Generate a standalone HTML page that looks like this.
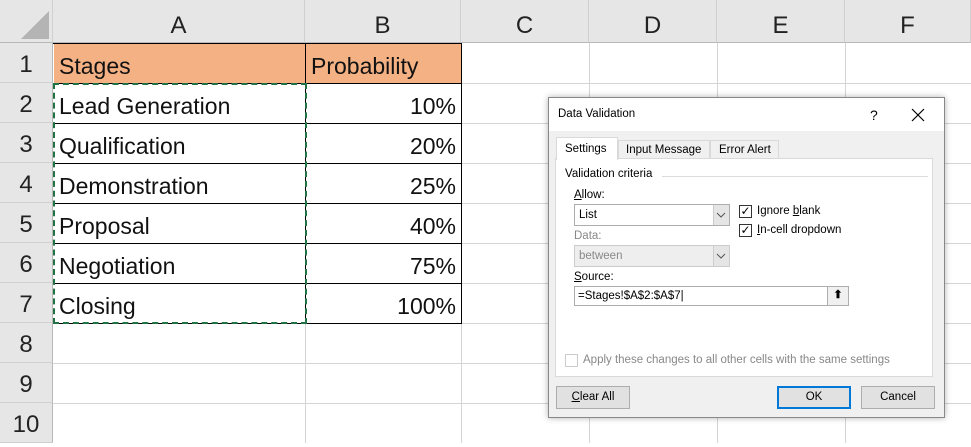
<!DOCTYPE html>
<html><head><meta charset="utf-8"><style>
*{margin:0;padding:0;box-sizing:border-box}
body{width:971px;height:443px;overflow:hidden;background:#fff;position:relative;font-family:"Liberation Sans",sans-serif}
.a{position:absolute}
.ch{position:absolute;top:0;height:43px;background:#e6e6e6;border-right:1px solid #d0d0d0;border-bottom:1px solid #b8b8b8;font-size:24px;text-align:center;line-height:52px;color:#222}
.rh{position:absolute;left:0;width:53px;height:40px;background:#e6e6e6;border-bottom:1px solid #d0d0d0;border-right:1px solid #b8b8b8;font-size:24px;text-align:center;line-height:44px;color:#222}
.hl{position:absolute;left:53px;width:918px;height:1px;background:#d4d4d4}
.vl{position:absolute;top:43px;width:1px;height:400px;background:#d4d4d4}
.t{position:absolute;font-size:23px;color:#111;line-height:40px}
.d{font-size:11.5px;color:#000}
.cb{position:absolute;width:13px;height:13px;border:1px solid #333;background:#fff;font-size:12px;line-height:11px;text-align:center}
.btn{position:absolute;height:23px;border:1px solid #adadad;background:#e1e1e1;font-size:11.5px;text-align:center;line-height:21px}
</style></head><body>
<div class="ch" style="left:0;width:53px"></div>
<svg class="a" style="left:19px;top:11px" width="32" height="30"><polygon points="30,0 30,28 2,28" fill="#b4b4b4"/></svg>
<div class="ch" style="left:53px;width:252px">A</div>
<div class="ch" style="left:305px;width:156px">B</div>
<div class="ch" style="left:461px;width:128px">C</div>
<div class="ch" style="left:589px;width:128px">D</div>
<div class="ch" style="left:717px;width:128px">E</div>
<div class="ch" style="left:845px;width:126px">F</div>

<div class="hl" style="top:83px"></div><div class="hl" style="top:123px"></div><div class="hl" style="top:163px"></div><div class="hl" style="top:203px"></div><div class="hl" style="top:243px"></div><div class="hl" style="top:283px"></div><div class="hl" style="top:323px"></div><div class="hl" style="top:363px"></div><div class="hl" style="top:403px"></div>
<div class="vl" style="left:305px"></div><div class="vl" style="left:461px"></div><div class="vl" style="left:589px"></div><div class="vl" style="left:717px"></div><div class="vl" style="left:845px"></div>

<div class="rh" style="top:43px">1</div><div class="rh" style="top:83px">2</div><div class="rh" style="top:123px">3</div><div class="rh" style="top:163px">4</div><div class="rh" style="top:203px">5</div><div class="rh" style="top:243px">6</div><div class="rh" style="top:283px">7</div><div class="rh" style="top:323px">8</div><div class="rh" style="top:363px">9</div><div class="rh" style="top:403px">10</div>

<div class="a" style="left:54px;top:43px;width:407px;height:40px;background:#f4b183"></div>
<div class="a" style="left:53px;top:43px;width:409px;height:281px;border:1px solid #000;border-left:none"></div>
<div class="a" style="left:305px;top:43px;width:1px;height:281px;background:#000"></div>
<div class="a" style="left:53px;top:83px;width:409px;height:1px;background:#000"></div>
<div class="a" style="left:53px;top:123px;width:409px;height:1px;background:#000"></div>
<div class="a" style="left:53px;top:163px;width:409px;height:1px;background:#000"></div>
<div class="a" style="left:53px;top:203px;width:409px;height:1px;background:#000"></div>
<div class="a" style="left:53px;top:243px;width:409px;height:1px;background:#000"></div>
<div class="a" style="left:53px;top:283px;width:409px;height:1px;background:#000"></div>
<div class="a" style="left:53px;top:83px;width:254px;height:241px;border:2px dashed #217346"></div>

<div class="t" style="left:59px;top:46px">Stages</div>
<div class="t" style="left:311px;top:46px">Probability</div>
<div class="t" style="left:59px;top:86px">Lead Generation</div>
<div class="t" style="left:59px;top:126px">Qualification</div>
<div class="t" style="left:59px;top:166px">Demonstration</div>
<div class="t" style="left:59px;top:206px">Proposal</div>
<div class="t" style="left:59px;top:246px">Negotiation</div>
<div class="t" style="left:59px;top:286px">Closing</div>
<div class="t" style="right:515px;top:86px">10%</div>
<div class="t" style="right:515px;top:126px">20%</div>
<div class="t" style="right:515px;top:166px">25%</div>
<div class="t" style="right:515px;top:206px">40%</div>
<div class="t" style="right:515px;top:246px">75%</div>
<div class="t" style="right:515px;top:286px">100%</div>

<!-- dialog -->
<div class="a" style="left:548px;top:97px;width:397px;height:321px;background:#f0f0f0;border:1px solid #888;box-shadow:0 0 6px rgba(0,0,0,.3)">
<div class="a" style="left:0;top:0;width:395px;height:33px;background:#fff"></div>
<div class="a d" style="left:9px;top:10px">Data Validation</div>
<div class="a d" style="left:321px;top:9px;font-size:14px">?</div>
<svg class="a" style="left:362px;top:10px" width="14" height="14"><path d="M1 1L13 13M13 1L1 13" stroke="#000" stroke-width="1.2"/></svg>
<div class="a" style="left:6px;top:60px;width:378px;height:219px;background:#fff;border:1px solid #d9d9d9"></div>
<div class="a d" style="left:7px;top:39px;width:62px;height:23px;background:#fff;border:1px solid #d9d9d9;border-bottom:none;line-height:22px;padding-left:8px">Settings</div>
<div class="a d" style="left:69px;top:42px;width:92px;height:19px;background:#f0f0f0;border:1px solid #d9d9d9;line-height:18px;padding-left:7px">Input Message</div>
<div class="a d" style="left:161px;top:42px;width:69px;height:19px;background:#f0f0f0;border:1px solid #d9d9d9;line-height:18px;padding-left:8px">Error Alert</div>
<div class="a d" style="left:16px;top:70px">Validation criteria</div>
<div class="a" style="left:113px;top:78px;width:266px;height:1px;background:#ddd"></div>
<div class="a d" style="left:25px;top:91px"><u>A</u>llow:</div>
<div class="a d" style="left:25px;top:106px;width:156px;height:22px;border:1px solid #adadad;background:#fff;line-height:20px;padding-left:4px">List</div>
<div class="a" style="left:164px;top:107px;width:16px;height:20px;background:#e5e5e5;border-left:1px solid #ccc"></div>
<svg class="a" style="left:167px;top:114px" width="10" height="6"><path d="M1 1L5 5L9 1" stroke="#555" fill="none"/></svg>
<div class="a d" style="left:25px;top:132px;color:#888">Data:</div>
<div class="a d" style="left:25px;top:147px;width:156px;height:22px;border:1px solid #ccc;background:#eee;line-height:20px;padding-left:4px;color:#888">between</div>
<div class="a" style="left:164px;top:148px;width:16px;height:20px;background:#e5e5e5;border-left:1px solid #ccc"></div>
<svg class="a" style="left:167px;top:155px" width="10" height="6"><path d="M1 1L5 5L9 1" stroke="#555" fill="none"/></svg>
<div class="cb" style="left:190px;top:107px">✓</div>
<div class="a d" style="left:208px;top:107px">Ignore <u>b</u>lank</div>
<div class="cb" style="left:190px;top:126px">✓</div>
<div class="a d" style="left:208px;top:126px"><u>I</u>n-cell dropdown</div>
<div class="a d" style="left:25px;top:173px"><u>S</u>ource:</div>
<div class="a d" style="left:25px;top:188px;width:275px;height:20px;border:1px solid #adadad;background:#fff;line-height:18px;padding-left:3px">=Stages!$A$2:$A$7|</div>
<div class="a" style="left:278px;top:189px;width:21px;height:18px;background:#f0f0f0;border-left:1px solid #adadad;font-size:11px;text-align:center;line-height:17px;font-weight:bold">⬆</div>
<div class="cb" style="left:16px;top:256px;border-color:#ccc"></div>
<div class="a d" style="left:34px;top:256px;color:#888">Apply these changes to all other cells with the same settings</div>
<div class="btn" style="left:7px;top:288px;width:74px"><u>C</u>lear All</div>
<div class="btn" style="left:228px;top:288px;width:74px;border:2px solid #0078d7;line-height:19px">OK</div>
<div class="btn" style="left:312px;top:288px;width:74px">Cancel</div>
</div>
</body></html>
